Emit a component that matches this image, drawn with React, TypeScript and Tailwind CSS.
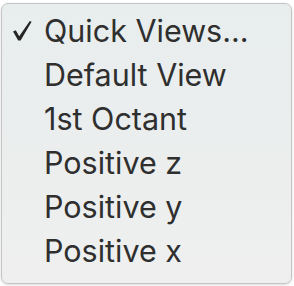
const items = ["Quick Views...", "Default View", "1st Octant", "Positive z", "Positive y", "Positive x"];

function Check() {
  return (
    <svg width="19" height="20" viewBox="0 0 19 20" className="block">
      <path d="M0 10.5 L2.8 9.2 L6.2 15.2 L16.8 0 L18.6 0.8 L7.6 19.5 L5.2 19.5 Z" fill="#262626" />
    </svg>
  );
}

export default function App() {
  return (
    <div className="w-[294px] h-[286px] bg-white pt-[3px] pl-[1px]">
      <div
        className="w-[291px] h-[281px] rounded-[7px] border border-[#c4c4c4] bg-gradient-to-b from-[#e8eded] to-[#efefef] pt-[5px] text-[#2f2f2f] shadow-[0_1px_3px_rgba(0,0,0,0.15)]"
        style={{ fontFamily: 'Inter, "Liberation Sans", Arial, sans-serif' }}
      >
        {items.map((label, i) => (
          <div key={label} className="flex items-center h-[44px] text-[30.5px] leading-[44px]">
            <div className="w-[42px] pl-[11px]">{i === 0 && <Check />}</div>
            <span>{label}</span>
          </div>
        ))}
      </div>
    </div>
  );
}
